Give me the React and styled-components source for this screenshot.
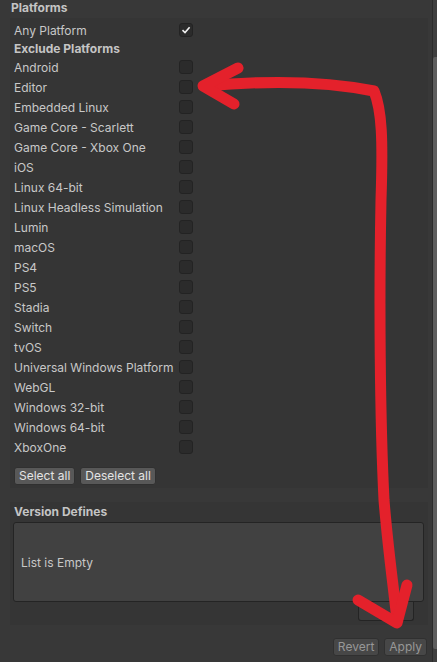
import styled, { createGlobalStyle } from "styled-components";

const GlobalStyle = createGlobalStyle`
  html, body {
    margin: 0;
    padding: 0;
    background: #383838;
  }
  body {
    font-family: Inter, "Noto Sans", "Liberation Sans", sans-serif;
    font-size: 12px;
    color: #c8c8c8;
  }
`;

const Window = styled.div`
  position: relative;
  width: 437px;
  height: 662px;
  overflow: hidden;
  display: flex;
  background: #383838;
`;

const Content = styled.div`
  width: 432px;
  display: flex;
  flex-direction: column;
`;

const ScrollTrack = styled.div`
  width: 5px;
  background: #3f3f3f;
  border-left: 1px solid #2c2c2c;
  box-sizing: border-box;
  padding-top: 57px;
`;

const ScrollThumb = styled.div`
  height: 592px;
  background: #5e5e5e;
  border-radius: 2px 0 0 2px;
`;

const SectionTitle = styled.div`
  height: 18px;
  line-height: 15px;
  padding-left: 11px;
  font-weight: 700;
  color: #c4c4c4;
`;

const Panel = styled.div`
  margin: 0 4px 0 10px;
  background: #353535;
  padding: ${(p) => p.$pad || "3px 0 3px 4px"};
  margin-top: ${(p) => p.$top || 0}px;
`;

const Row = styled.div`
  display: grid;
  grid-template-columns: 165px 14px;
  align-items: center;
  height: ${(p) => p.$h || 20}px;
`;

const Label = styled.span`
  white-space: nowrap;
  font-weight: ${(p) => (p.$bold ? 700 : 400)};
  color: ${(p) => (p.$bold ? "#c4c4c4" : "#c8c8c8")};
`;

const Check = styled.span`
  width: 14px;
  height: 14px;
  box-sizing: border-box;
  border: 1px solid #232323;
  border-radius: 3px;
  background: #2b2b2b;
  display: flex;
  align-items: center;
  justify-content: center;
`;

const ButtonRow = styled.div`
  display: flex;
  gap: 5px;
  margin-top: 10px;
`;

const Button = styled.button`
  height: 18px;
  padding: 0 4px;
  font: inherit;
  font-size: 12px;
  line-height: 16px;
  border: 1px solid #303030;
  border-radius: 3px;
  background: ${(p) => (p.$disabled ? "#474747" : "#585858")};
  color: ${(p) => (p.$disabled ? "#979797" : "#e4e4e4")};
  cursor: default;
`;

const SubHeader = styled.div`
  height: 20px;
  line-height: 20px;
  padding-left: 4px;
  font-weight: 700;
  color: #c4c4c4;
`;

const ListBox = styled.div`
  margin: 0 4px 0 3px;
  height: 80px;
  box-sizing: border-box;
  background: #414141;
  border: 1px solid #242424;
  border-radius: 3px;
  display: flex;
  align-items: center;
  padding: 0 0 0 7px;
`;

const ListFooter = styled.div`
  align-self: flex-end;
  margin-right: 14px;
  width: 56px;
  height: 19px;
  box-sizing: border-box;
  background: #3c3c3c;
  border: 1px solid #242424;
  border-top: none;
  border-radius: 0 0 3px 3px;
  display: flex;
  justify-content: center;
  align-items: center;
  gap: 14px;
  color: #d8d8d8;
  font-size: 12px;
`;

const Section = styled.div`
  margin: 14px 4px 0 10px;
  background: #353535;
  display: flex;
  flex-direction: column;
  padding-bottom: 4px;
`;

const ActionBar = styled.div`
  display: flex;
  justify-content: flex-end;
  gap: 5px;
  margin-top: 13px;
  padding-right: 5px;
`;

const Overlay = styled.svg`
  position: absolute;
  left: 0;
  top: 0;
  pointer-events: none;
`;

const platforms = [
  "Android",
  "Editor",
  "Embedded Linux",
  "Game Core - Scarlett",
  "Game Core - Xbox One",
  "iOS",
  "Linux 64-bit",
  "Linux Headless Simulation",
  "Lumin",
  "macOS",
  "PS4",
  "PS5",
  "Stadia",
  "Switch",
  "tvOS",
  "Universal Windows Platform",
  "WebGL",
  "Windows 32-bit",
  "Windows 64-bit",
  "XboxOne",
];

function CheckMark() {
  return (
    <svg width="10" height="10" viewBox="0 0 10 10">
      <path d="M1.5 5.2 L4 7.6 L8.6 2.2" fill="none" stroke="#f0f0f0" strokeWidth="1.6" />
    </svg>
  );
}

export default function App() {
  return (
    <>
      <GlobalStyle />
      <Window>
        <Content>
          <SectionTitle>Platforms</SectionTitle>
          <Panel>
            <Row $h={18}>
              <Label>Any Platform</Label>
              <Check>
                <CheckMark />
              </Check>
            </Row>
            <Row $h={18}>
              <Label $bold>Exclude Platforms</Label>
            </Row>
            {platforms.map((name) => (
              <Row key={name}>
                <Label>{name}</Label>
                <Check />
              </Row>
            ))}
            <ButtonRow>
              <Button>Select all</Button>
              <Button>Deselect all</Button>
            </ButtonRow>
          </Panel>

          <Section>
            <SubHeader>Version Defines</SubHeader>
            <ListBox>List is Empty</ListBox>
            <ListFooter>
              <span>+</span>
              <span>−</span>
            </ListFooter>
          </Section>

          <ActionBar>
            <Button $disabled>Revert</Button>
            <Button $disabled>Apply</Button>
          </ActionBar>
        </Content>
        <ScrollTrack>
          <ScrollThumb />
        </ScrollTrack>

        <Overlay width="437" height="662" viewBox="0 0 437 662">
          <g fill="none" stroke="#e4212b" strokeWidth="11" strokeLinecap="round" strokeLinejoin="round">
            <path d="M205 86 C 260 81, 320 80, 374 91 C 382 110, 383 140, 381 200 C 379 300, 380 420, 384 500 C 388 550, 394 590, 397 621" />
            <path d="M238 68 L203 86 L234 104" />
            <path d="M358 600 L397 623 L407 585" />
          </g>
        </Overlay>
      </Window>
    </>
  );
}
